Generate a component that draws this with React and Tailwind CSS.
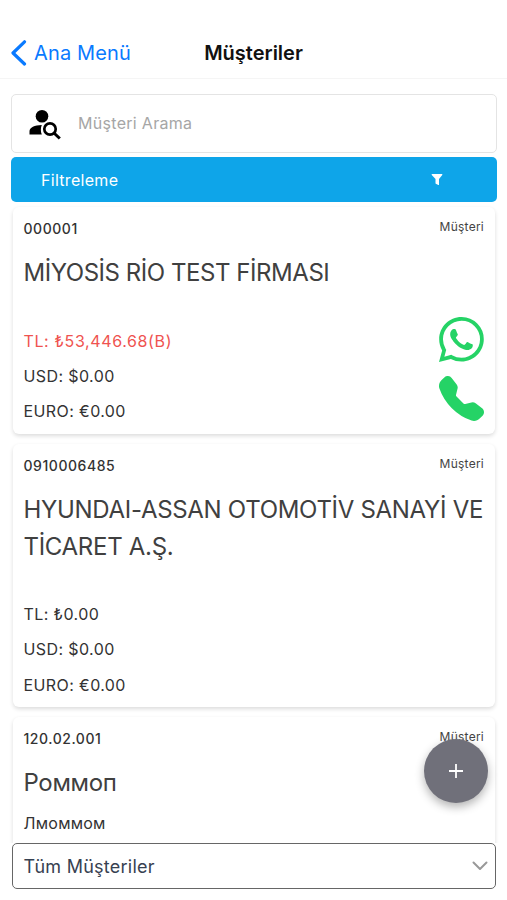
import { BsWhatsapp, BsTelephoneFill } from "react-icons/bs";

const customers = [
  {
    code: "000001",
    name: "MİYOSİS RİO TEST FİRMASI",
    tracking: "tracking-[-0.45px]",
    tl: "₺53,446.68(B)",
    debt: true,
    contact: true,
    height: "h-[227px]",
  },
  {
    code: "0910006485",
    name: "HYUNDAI-ASSAN OTOMOTİV SANAYİ VE TİCARET A.Ş.",
    tracking: "tracking-[-0.3px]",
    tl: "₺0.00",
    height: "h-[263px]",
  },
  {
    code: "120.02.001",
    name: "Роммоп",
    tracking: "tracking-[-0.35px]",
    note: "Лмоммом",
    height: "h-[227px]",
  },
];

function PersonSearchIcon() {
  return (
    <svg width="34" height="32" viewBox="0 0 34 32" fill="none" className="text-black">
      <circle cx="14" cy="8.3" r="6.3" fill="currentColor" />
      <path d="M1.500 26.500v-3.200c0-3.600 5-6.200 12.300-6.300-1.200 2.900-1.300 6.500 0 9.500Z" fill="currentColor" />
      <circle cx="22" cy="21" r="5.700" stroke="currentColor" strokeWidth="2.700" />
      <path d="m26 25 5.800 5.500" stroke="currentColor" strokeWidth="3" />
    </svg>
  );
}

function FunnelIcon() {
  return (
    <svg width="12" height="13" viewBox="0 0 12 13" fill="currentColor">
      <path d="M1.200 1h9.600a.6.6 0 0 1 .45 1L8 6v5.700a.4.4 0 0 1-.6.35L4.800 10.800a.6.6 0 0 1-.3-.5V6L.75 2a.6.6 0 0 1 .45-1Z" />
    </svg>
  );
}

function CustomerCard({ customer }) {
  return (
    <article
      className={`${customer.height} shrink-0 rounded-md bg-white pl-[10.5px] pr-[11px] pt-[11px] shadow-[0_2px_4px_rgba(0,0,0,0.14)]`}
    >
      <div className="flex h-[20px] items-center justify-between">
        <span className="text-[14px] font-medium tracking-[0.55px] text-[#333]">{customer.code}</span>
        <span className="-mt-[2px] text-[12px] tracking-[0.25px] text-[#444]">Müşteri</span>
      </div>
      <h2 className={`${customer.tracking} -mr-2 mt-[17px] text-[24px] leading-[36.5px] text-[#404040]`}>
        {customer.name}
      </h2>
      <p className="h-[32px] pt-[10px] text-[16px] leading-[22px] tracking-[0.25px] text-[#333]">{customer.note}</p>
      {customer.tl && (
        <div className="flex justify-between">
          <div className="text-[16px] leading-[35.4px] tracking-[0.4px] text-[#333]">
            <p className={customer.debt ? "tracking-[0.62px] text-[#ef5350]" : ""}>TL: {customer.tl}</p>
            <p>USD: $0.00</p>
            <p>EURO: €0.00</p>
          </div>
          {customer.contact && (
            <div className="-mt-[7px] flex flex-col gap-[14px] text-[#25d366]">
              <BsWhatsapp size={45} />
              <BsTelephoneFill size={45} />
            </div>
          )}
        </div>
      )}
    </article>
  );
}

export default function App() {
  return (
    <div className="relative flex h-[900px] w-[507px] flex-col overflow-hidden bg-white font-['Inter',sans-serif]">
      <header className="grid h-[79px] shrink-0 grid-cols-3 items-end border-b border-[#f5f5f5] pb-[10px]">
        <button className="flex items-center gap-[7px] pl-[11px] text-[20px] leading-[30px] tracking-[0.15px] text-[#0a7aff]">
          <svg width="16" height="26" viewBox="0 0 16 26" fill="none" stroke="currentColor" strokeWidth="3.2" strokeLinecap="round" strokeLinejoin="round">
            <path d="M13.500 1.800 2 13l11.500 11" />
          </svg>
          <span className="whitespace-nowrap">Ana Menü</span>
        </button>
        <h1 className="text-center text-[20px] font-semibold leading-[30px] text-[#111]">Müşteriler</h1>
      </header>

      <main className="flex min-h-0 flex-1 flex-col overflow-hidden pl-[11px] pr-[10px] pt-[15px]">
        <div className="flex h-[59px] shrink-0 items-center rounded-[5px] border border-[#e4e4e4] pl-[16px]">
          <PersonSearchIcon />
          <span className="-mt-[2px] ml-[16px] text-[16px] tracking-[0.3px] text-[#a6a6a6]">Müşteri Arama</span>
        </div>
        <div className="mt-[4px] flex h-[45px] shrink-0 items-center justify-between rounded-[5px] bg-[#0ea5e9] pl-[30px] pr-[54px] text-white">
          <span className="text-[16px] tracking-[0.3px]">Filtreleme</span>
          <FunnelIcon />
        </div>
        <div className="-mx-1 flex min-h-0 flex-1 flex-col gap-[10px] overflow-hidden px-[6px] pt-[5px]">
          {customers.map((customer) => (
            <CustomerCard key={customer.code} customer={customer} />
          ))}
        </div>
      </main>

      <div className="ml-[12px] mr-[11px] mb-[11px] flex h-[46px] shrink-0 items-center justify-between rounded-[5px] border border-[#666] pl-[10.5px] pr-[7px]">
        <span className="text-[18px] tracking-[0.25px] text-[#374151]">Tüm Müşteriler</span>
        <svg width="16" height="10" viewBox="0 0 16 10" fill="none" stroke="#999" strokeWidth="2" strokeLinecap="round" strokeLinejoin="round">
          <path d="M1.500 1.500 8 8l6.500-6.500" />
        </svg>
      </div>

      <button className="absolute bottom-[97px] right-[19px] flex size-[64px] items-center justify-center rounded-full bg-[#70707a] shadow-[0_4px_10px_rgba(0,0,0,0.3)]">
        <svg width="16" height="16" viewBox="0 0 16 16" stroke="white" strokeWidth="1.800">
          <path d="M8 1v14M1 8h14" />
        </svg>
      </button>
    </div>
  );
}
